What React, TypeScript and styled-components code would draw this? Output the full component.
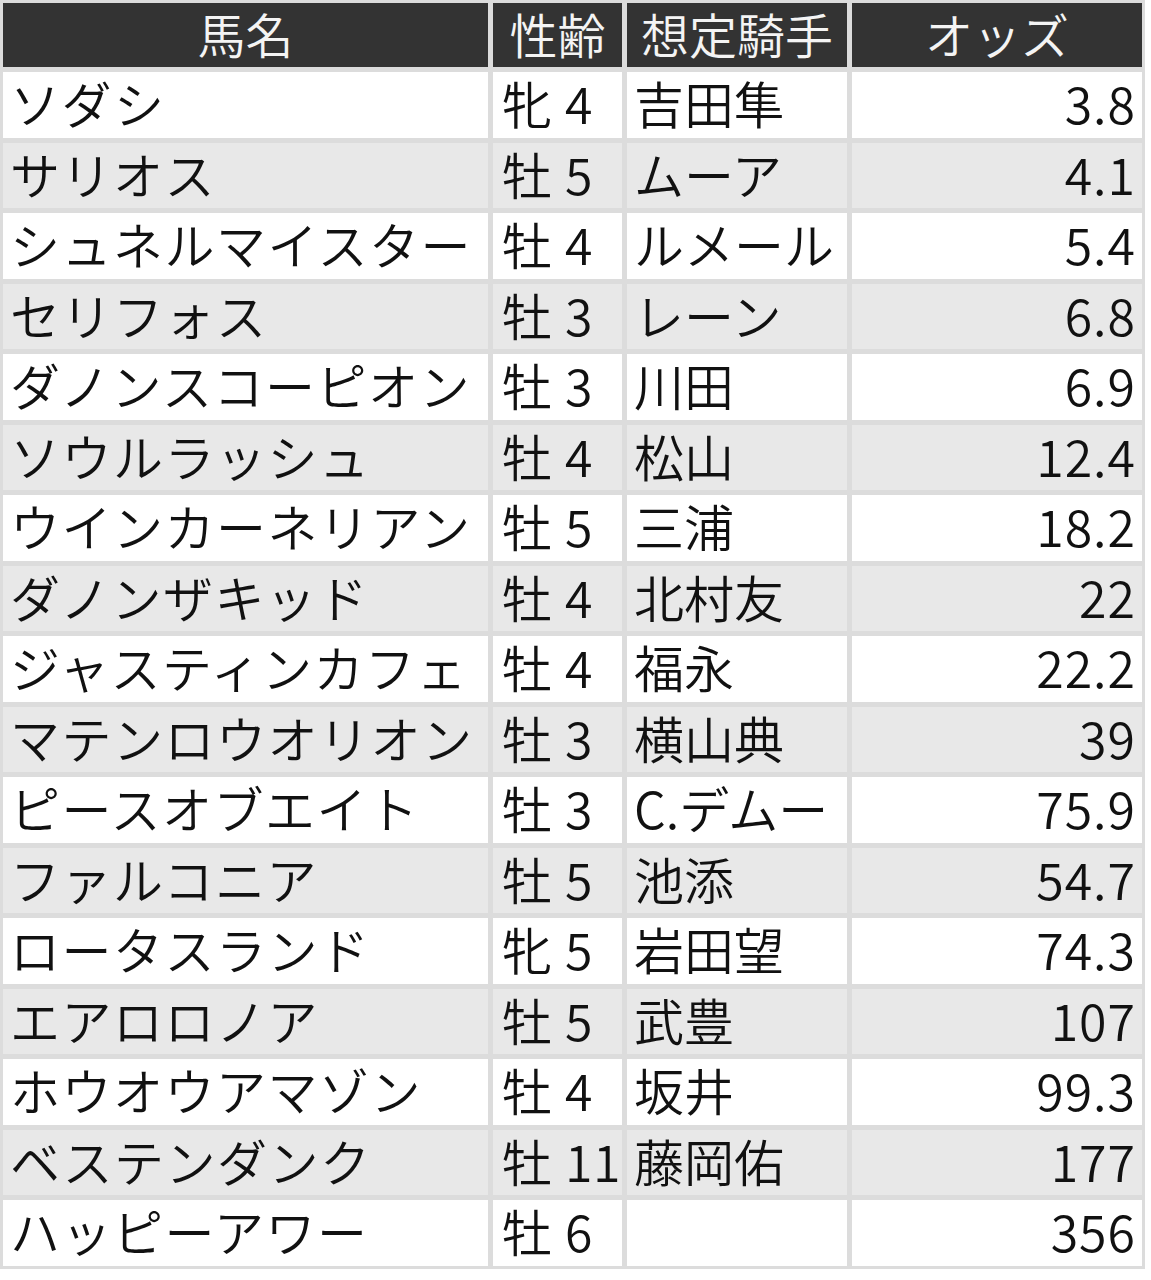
import React from "react";
import styled, { createGlobalStyle } from "styled-components";

const GlobalStyle = createGlobalStyle`
  html, body { margin: 0; padding: 0; background: #ffffff; }
  body { font-family: "Noto Sans CJK JP", "Noto Sans", sans-serif; }
`;

const Table = styled.div`
  display: grid;
  grid-template-columns: 485px 129px 220px 290px;
  grid-template-rows: 64px repeat(17, 65.5px);
  column-gap: 5px;
  row-gap: 5px;
  padding: 3px;
  width: max-content;
  background: #dcdcdc;
`;

const Row = styled.div`
  display: contents;
`;

const HeaderCell = styled.div`
  background: #333333;
  color: #f4f4f4;
  font-size: 48px;
  font-weight: 350;
  line-height: 1.1;
  display: flex;
  align-items: center;
  justify-content: center;
  padding-bottom: 3px;
  white-space: nowrap;
`;

const Cell = styled.div<{ $shade: boolean; $align?: "left" | "right" }>`
  background: ${(p) => (p.$shade ? "#e8e8e8" : "#ffffff")};
  color: #111111;
  font-size: 50px;
  font-weight: 350;
  line-height: 1.2;
  display: flex;
  align-items: center;
  justify-content: ${(p) => (p.$align === "right" ? "flex-end" : "flex-start")};
  padding: 0 ${(p) => (p.$align === "right" ? "6px" : "0")} 5px
    ${(p) => (p.$align === "right" ? "0" : "7px")};
  white-space: nowrap;
`;

const Name = styled.span`
  letter-spacing: 1.5px;
`;

const Sex = styled.span`
  padding-left: 2px;
  margin-right: 13px;
`;

const Age = styled.span`
  letter-spacing: 0.5px;
`;

const Odds = styled.span`
  letter-spacing: 1px;
`;

type Horse = [string, string, string, string, string];

const horses: Horse[] = [
  ["ソダシ", "牝", "4", "吉田隼", "3.8"],
  ["サリオス", "牡", "5", "ムーア", "4.1"],
  ["シュネルマイスター", "牡", "4", "ルメール", "5.4"],
  ["セリフォス", "牡", "3", "レーン", "6.8"],
  ["ダノンスコーピオン", "牡", "3", "川田", "6.9"],
  ["ソウルラッシュ", "牡", "4", "松山", "12.4"],
  ["ウインカーネリアン", "牡", "5", "三浦", "18.2"],
  ["ダノンザキッド", "牡", "4", "北村友", "22"],
  ["ジャスティンカフェ", "牡", "4", "福永", "22.2"],
  ["マテンロウオリオン", "牡", "3", "横山典", "39"],
  ["ピースオブエイト", "牡", "3", "C.デムー", "75.9"],
  ["ファルコニア", "牡", "5", "池添", "54.7"],
  ["ロータスランド", "牝", "5", "岩田望", "74.3"],
  ["エアロロノア", "牡", "5", "武豊", "107"],
  ["ホウオウアマゾン", "牡", "4", "坂井", "99.3"],
  ["ベステンダンク", "牡", "11", "藤岡佑", "177"],
  ["ハッピーアワー", "牡", "6", "", "356"],
];

export default function App() {
  return (
    <>
      <GlobalStyle />
      <Table>
        <Row>
          <HeaderCell>馬名</HeaderCell>
          <HeaderCell>性齢</HeaderCell>
          <HeaderCell>想定騎手</HeaderCell>
          <HeaderCell>オッズ</HeaderCell>
        </Row>
        {horses.map(([name, sex, age, jockey, odds], i) => {
          const shade = i % 2 === 1;
          return (
            <Row key={name}>
              <Cell $shade={shade}>
                <Name>{name}</Name>
              </Cell>
              <Cell $shade={shade}>
                <Sex>{sex}</Sex>
                <Age>{age}</Age>
              </Cell>
              <Cell $shade={shade}>{jockey}</Cell>
              <Cell $shade={shade} $align="right">
                <Odds>{odds}</Odds>
              </Cell>
            </Row>
          );
        })}
      </Table>
    </>
  );
}
